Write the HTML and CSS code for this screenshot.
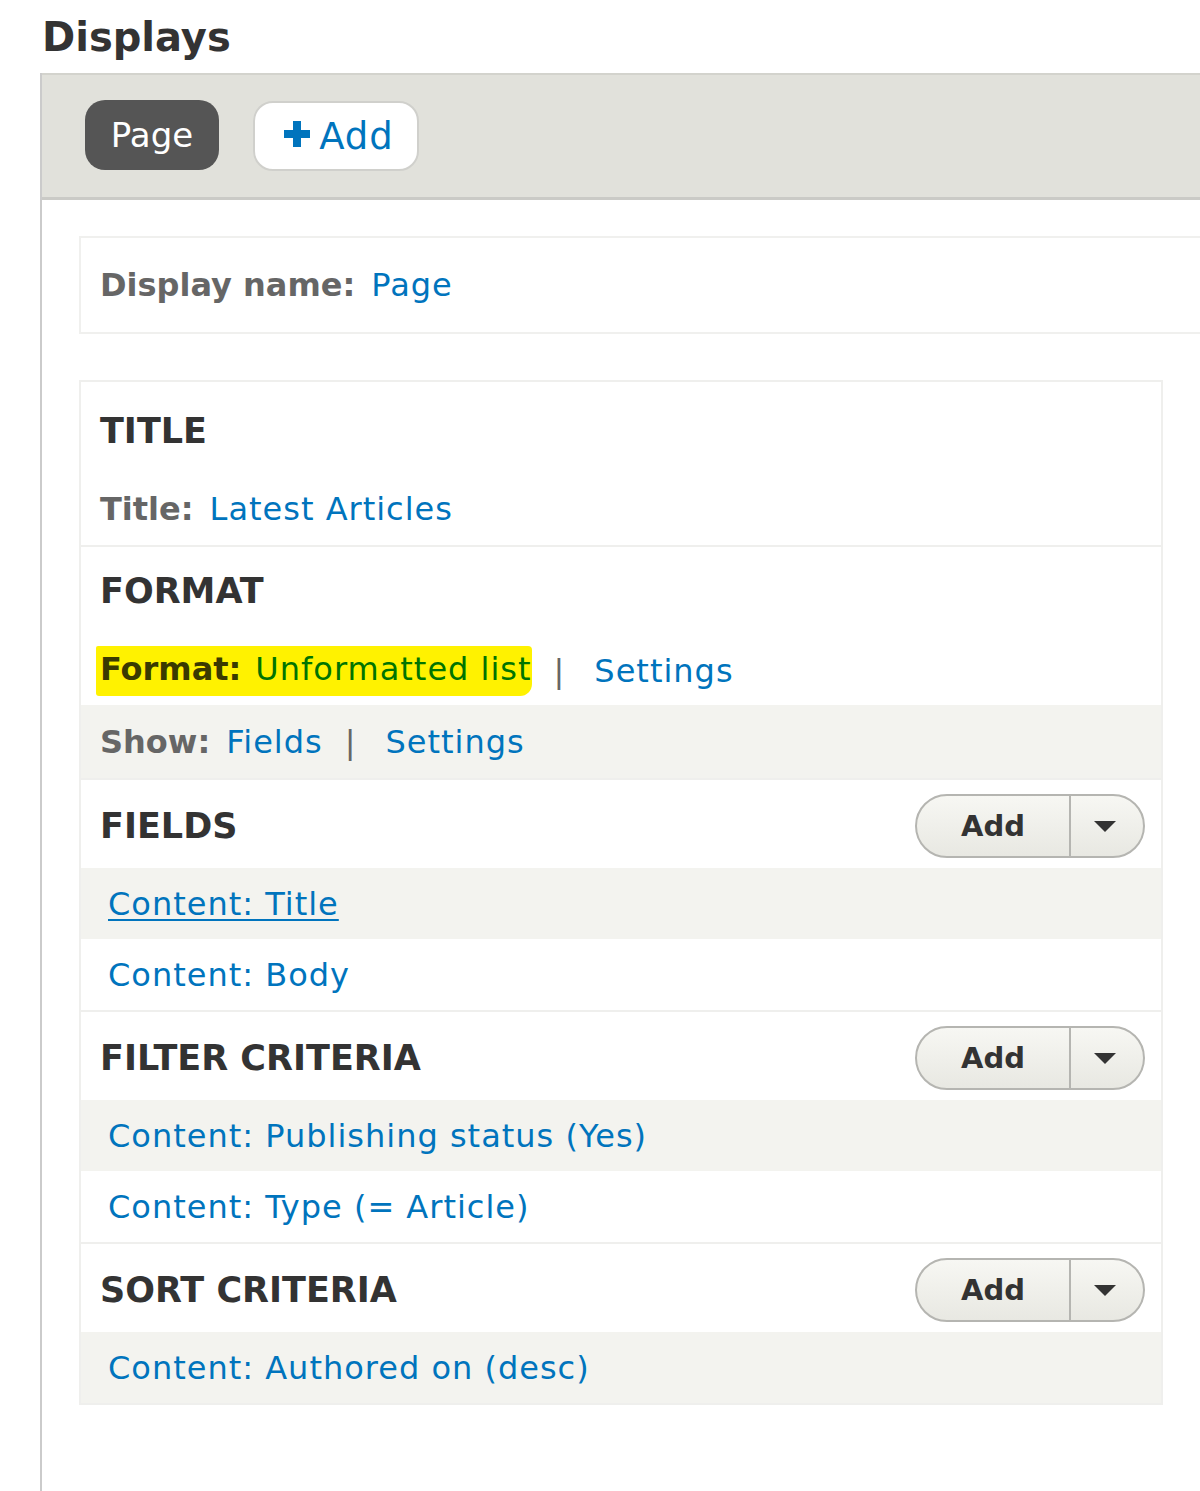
FILE: index.html
```html
<!DOCTYPE html>
<html lang="en">
<head>
  <meta charset="UTF-8">
  <meta name="viewport" content="width=device-width, initial-scale=1.0">
  <title>Displays</title>
  <link rel="stylesheet" href="styles.css">
</head>
<body>
  <h2 class="page-title">Displays</h2>

  <section class="displays">
    <!-- Display tabs -->
    <div class="tabs">
      <a class="tab tab-active" href="#">Page</a>
      <a class="tab tab-add" href="#">
        <svg class="plus" width="26" height="26" viewBox="0 0 26 26" aria-hidden="true">
          <rect x="9" y="0" width="8" height="26" fill="#0074bd"/>
          <rect x="0" y="9" width="26" height="8" fill="#0074bd"/>
        </svg>Add
      </a>
    </div>

    <div class="displays-body">
      <div class="display-name">
        <span class="label">Display name:</span> <a href="#">Page</a>
      </div>

      <div class="settings">
        <div class="section">
          <div class="section-head head-tall"><h3>TITLE</h3></div>
          <div class="row"><span class="label">Title:</span> <a href="#">Latest Articles</a></div>
        </div>

        <div class="section">
          <div class="section-head head-short"><h3>FORMAT</h3></div>
          <div class="row row-format">
            <span class="marker"><span class="label">Format:</span> <a href="#">Unformatted list</a></span>
            <span class="sep">|</span>
            <a href="#">Settings</a>
          </div>
          <div class="row row-odd">
            <span class="label">Show:</span> <a href="#">Fields</a>
            <span class="sep">|</span>
            <a href="#">Settings</a>
          </div>
        </div>

        <div class="section">
          <div class="section-head">
            <h3>FIELDS</h3>
            <div class="dropbutton">
              <span class="dropbutton-main">Add</span>
              <span class="dropbutton-toggle"><span class="caret"></span></span>
            </div>
          </div>
          <div class="row row-field row-odd"><a class="hover" href="#">Content: Title</a></div>
          <div class="row row-field"><a href="#">Content: Body</a></div>
        </div>

        <div class="section">
          <div class="section-head">
            <h3>FILTER CRITERIA</h3>
            <div class="dropbutton">
              <span class="dropbutton-main">Add</span>
              <span class="dropbutton-toggle"><span class="caret"></span></span>
            </div>
          </div>
          <div class="row row-field row-odd"><a href="#">Content: Publishing status (Yes)</a></div>
          <div class="row row-field"><a href="#">Content: Type (= Article)</a></div>
        </div>

        <div class="section section-last">
          <div class="section-head">
            <h3>SORT CRITERIA</h3>
            <div class="dropbutton">
              <span class="dropbutton-main">Add</span>
              <span class="dropbutton-toggle"><span class="caret"></span></span>
            </div>
          </div>
          <div class="row row-field row-odd"><a href="#">Content: Authored on (desc)</a></div>
        </div>
      </div>
    </div>
  </section>
</body>
</html>
```

FILE: styles.css
```css
* {
  margin: 0;
  padding: 0;
  box-sizing: border-box;
}

html,
body {
  overflow-x: hidden;
}

body {
  font-family: "DejaVu Sans", "Open Sans", sans-serif;
  color: #333;
  background: #fff;
  min-height: 1491px;
}

a {
  color: #0074bd;
  text-decoration: none;
  letter-spacing: 1px;
}

.label {
  color: #666;
  font-weight: 700;
}

.page-title {
  font-size: 40px;
  font-weight: 700;
  line-height: 1;
  padding: 17px 0 0 42px;
  height: 73px;
  color: #333;
}

.displays {
  margin-left: 40px;
  border-left: 2px solid #cbcbcb;
  min-height: 1418px;
}

/* tabs bar */
.tabs {
  display: flex;
  align-items: center;
  gap: 34px;
  height: 127px;
  padding: 0 0 0 43px;
  background: #e1e1db;
  border-top: 2px solid #d3d3cd;
  border-bottom: 3px solid #cacac6;
}

.tab {
  display: flex;
  align-items: center;
  justify-content: center;
  height: 70px;
  border-radius: 20px;
  font-size: 34px;
  line-height: 1;
  letter-spacing: 0;
}

.tab-active {
  width: 134px;
  margin-top: -2px;
  background: #555;
  color: #fff;
}

.tab-add {
  width: 166px;
  padding-left: 6px;
  background: #fff;
  border: 2px solid #d0d0cc;
  color: #0074bd;
  gap: 9px;
  font-size: 37px;
  letter-spacing: 1px;
}

.plus {
  margin-top: -4px;
}

.displays-body {
  padding: 36px 37px 0 37px;
}

.display-name {
  display: flex;
  align-items: center;
  gap: 16px;
  height: 98px;
  margin-right: -80px;
  padding-left: 19px;
  border: 2px solid #f0f0ee;
  font-size: 32px;
}

/* settings box */
.settings {
  margin-top: 46px;
  border: 2px solid #efefed;
  font-size: 32px;
}

.section {
  border-bottom: 2px solid #efefed;
}

.section-last {
  border-bottom: 0;
}

.section-head {
  display: flex;
  align-items: center;
  justify-content: space-between;
  height: 88px;
  padding: 4px 16px 0 19px;
}

.head-tall {
  height: 90px;
  padding-top: 8px;
}

.head-short {
  height: 85px;
}

.section-head h3 {
  font-size: 35px;
  font-weight: 700;
  color: #333;
  line-height: 1;
}

.row {
  display: flex;
  align-items: center;
  height: 73px;
  padding-left: 19px;
  gap: 16px;
}

.row-format {
  padding-top: 4px;
}

.row-field {
  height: 71px;
  padding-left: 27px;
}

.row-odd {
  background: #f3f3ef;
}

.sep {
  color: #666;
  margin: 0 14px 0 6px;
}

.hover {
  text-decoration: underline;
  text-decoration-thickness: 2px;
  text-underline-offset: 4px;
}

/* highlighter pen over the format line */
.marker {
  display: inline-flex;
  gap: 14px;
  margin-left: -4px;
  padding: 4px 0 8px 4px;
  background: #fff200;
  border-radius: 2px 4px 12px 3px;
}

.marker .label {
  color: #3a3a00;
}

.marker a {
  color: #007400;
}

/* dropbutton */
.dropbutton {
  display: flex;
  height: 64px;
  width: 230px;
  border: 2px solid #b5b5b1;
  border-radius: 32px;
  background: linear-gradient(#f7f7f3, #e8e8e2);
  overflow: hidden;
}

.dropbutton-main {
  display: flex;
  align-items: center;
  justify-content: center;
  width: 152px;
  font-size: 29px;
  font-weight: 700;
  color: #333;
}

.dropbutton-toggle {
  display: flex;
  align-items: center;
  justify-content: center;
  flex: 1;
  border-left: 2px solid #b5b5b1;
}

.caret {
  width: 0;
  height: 0;
  margin-left: -4px;
  border-left: 11px solid transparent;
  border-right: 11px solid transparent;
  border-top: 11px solid #333;
}
```
